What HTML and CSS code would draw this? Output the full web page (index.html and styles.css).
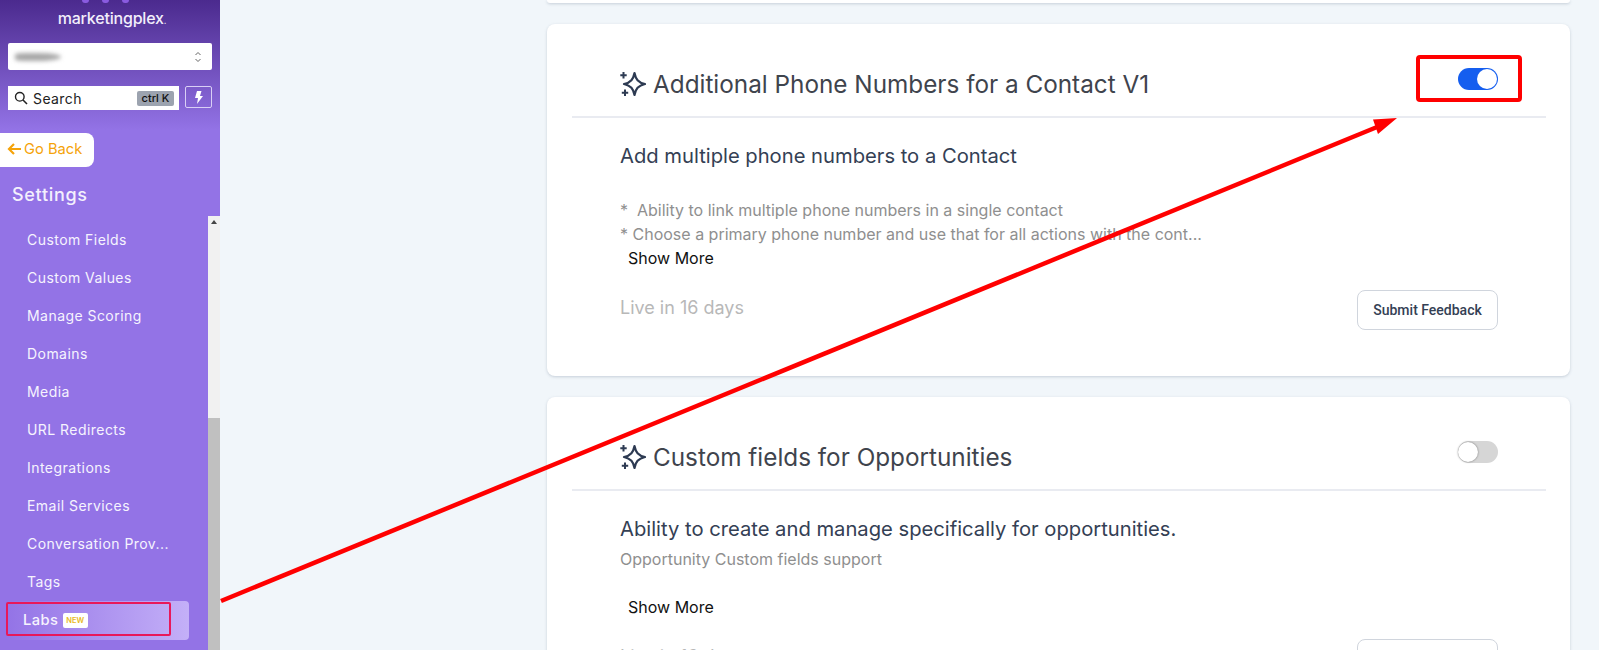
FILE: index.html
```html
<!DOCTYPE html>
<html lang="en">
<head>
    <meta charset="UTF-8">
    <meta name="viewport" content="width=device-width, initial-scale=1.0">
    <title>Labs</title>
    <link rel="stylesheet" href="styles.css">
</head>
<body>
    <aside class="sidebar">
        <div class="logo-dots"><span></span><span></span><span></span></div>
        <div class="logo-name">marketingplex<small>.</small></div>
        <div class="account-select">
            <span class="blurred-name"></span>
            <svg class="chevrons" width="8" height="14" viewBox="0 0 8 14"><path d="M1.500 5L4 2.500 6.500 5M1.500 9L4 11.500 6.500 9" fill="none" stroke="#666" stroke-width="1"/></svg>
        </div>
        <div class="search-row">
            <div class="search-box">
                <svg width="14" height="14" viewBox="0 0 14 14"><circle cx="5.800" cy="5.800" r="4.300" fill="none" stroke="#222" stroke-width="1.400"/><path d="M9 9l4 4" stroke="#222" stroke-width="1.600"/></svg>
                <span class="search-label">Search</span>
                <kbd class="shortcut">ctrl K</kbd>
            </div>
            <button class="bolt-btn">
                <svg width="9" height="13" viewBox="0 0 9 13"><path d="M3 0h4.500L6 5h3L3 13l1-6H1z" fill="#fff"/></svg>
            </button>
        </div>
        <a class="go-back">
            <svg width="14" height="14" viewBox="0 0 14 14"><path d="M7 2L2 7l5 5M2 7h12" fill="none" stroke="#f5a30a" stroke-width="2.200"/></svg>
            Go Back
        </a>
        <div class="settings-title">Settings</div>
        <div class="nav-wrap">
            <nav class="nav-list">
                <a>Custom Fields</a>
                <a>Custom Values</a>
                <a>Manage Scoring</a>
                <a>Domains</a>
                <a>Media</a>
                <a>URL Redirects</a>
                <a>Integrations</a>
                <a>Email Services</a>
                <a>Conversation Prov...</a>
                <a>Tags</a>
                <a class="active">Labs <span class="new-badge">NEW</span></a>
            </nav>
            <div class="scrollbar">
                <span class="scroll-up"></span>
                <span class="scroll-thumb"></span>
            </div>
        </div>
    </aside>

    <main class="content">
        <div class="card card-stub"></div>

        <section class="card">
            <header class="card-head">
                <h2>
                    <svg class="sparkle" viewBox="0 0 26 26"><path d="M14.500 2c1.200 6 3.500 9.400 10.500 11-7 1.600-9.300 5-10.500 11-1.200-6-3.500-9.400-10.500-11 7-1.600 9.300-5 10.500-11z" fill="none" stroke="#2d3a52" stroke-width="2.200" stroke-linejoin="round"/><path d="M3.500 1v6.500M.3 4.200h6.400M5 18.500V25M1.800 21.700h6.400" stroke="#2d3a52" stroke-width="2"/></svg>
                    Additional Phone Numbers for a Contact V1
                </h2>
                <span class="toggle on"></span>
            </header>
            <div class="card-body">
                <h3>Add multiple phone numbers to a Contact</h3>
                <p class="desc desc-list">*&nbsp; Ability to link multiple phone numbers in a single contact<br>* Choose a primary phone number and use that for all actions with the cont...</p>
                <a class="show-more">Show More</a>
                <div class="card-foot">
                    <span class="live">Live in 16 days</span>
                    <button class="feedback">Submit Feedback</button>
                </div>
            </div>
        </section>

        <section class="card">
            <header class="card-head">
                <h2>
                    <svg class="sparkle" viewBox="0 0 26 26"><path d="M14.500 2c1.200 6 3.500 9.400 10.500 11-7 1.600-9.300 5-10.500 11-1.200-6-3.500-9.400-10.500-11 7-1.600 9.300-5 10.500-11z" fill="none" stroke="#2d3a52" stroke-width="2.200" stroke-linejoin="round"/><path d="M3.500 1v6.500M.3 4.200h6.400M5 18.500V25M1.800 21.700h6.400" stroke="#2d3a52" stroke-width="2"/></svg>
                    Custom fields for Opportunities
                </h2>
                <span class="toggle"></span>
            </header>
            <div class="card-body">
                <h3>Ability to create and manage specifically for opportunities.</h3>
                <p class="desc">Opportunity Custom fields support</p>
                <a class="show-more show-more-gap">Show More</a>
                <div class="card-foot">
                    <span class="live">Live in 16 days</span>
                    <button class="feedback">Submit Feedback</button>
                </div>
            </div>
        </section>
    </main>

    <!-- screenshot annotations -->
    <div class="mark mark-toggle"></div>
    <div class="mark mark-labs"></div>
    <svg class="arrow" width="1599" height="650" viewBox="0 0 1599 650">
        <path d="M221 601L1382 125" stroke="#f00" stroke-width="4.500" fill="none"/>
        <path d="M1397 118L1373 119.500 1378 134z" fill="#f00"/>
    </svg>
</body>
</html>
```

FILE: styles.css
```css
* {
    box-sizing: border-box;
}
html, body {
    height: 650px;
}
body {
    margin: 0;
    overflow: hidden;
    display: flex;
    background: #f1f6fa;
    font-family: Inter, "Liberation Sans", sans-serif;
}
.sidebar {
    width: 220px;
    height: 650px;
    flex-shrink: 0;
    display: flex;
    flex-direction: column;
    background: linear-gradient(to bottom, #4b2a8e 0, #9373e6 130px, #9373e6 100%);
    font-family: Inter, "Liberation Sans", sans-serif;
    color: #fff;
}
.logo-dots {
    height: 3px;
    display: flex;
    justify-content: center;
    gap: 13px;
    padding-right: 10px;
}
.logo-dots span {
    width: 7px;
    height: 3px;
    border-radius: 0 0 4px 4px;
    background: #8a5be0;
}
.logo-name {
    margin-top: 5px;
    padding-left: 4px;
    height: 20px;
    text-align: center;
    font-size: 16px;
    font-weight: 500;
    line-height: 20px;
    letter-spacing: -0.2px;
    color: #f2eefb;
}
.logo-name small {
    font-size: 9px;
}
.account-select {
    margin: 15px 8px 0;
    height: 27px;
    width: 204px;
    background: #fff;
    border-radius: 2px;
    display: flex;
    align-items: center;
    justify-content: space-between;
    padding: 0 10px 0 7px;
}
.blurred-name {
    width: 46px;
    height: 8px;
    background: #a8a8a8;
    border-radius: 40% 100% 100% 40%;
    filter: blur(2px);
}
.search-row {
    margin: 16px 8px 0;
    display: flex;
    gap: 6px;
}
.search-box {
    width: 171px;
    height: 24px;
    background: #fff;
    display: flex;
    align-items: center;
    padding: 0 5px 0 6px;
    color: #222;
}
.search-label {
    margin-left: 5px;
    flex: 1;
    font-size: 14px;
    letter-spacing: 0.4px;
}
.shortcut {
    width: 37px;
    height: 15px;
    background: #9ca3af;
    border-radius: 2px;
    font-family: Inter, sans-serif;
    font-size: 11px;
    font-weight: 500;
    line-height: 15px;
    text-align: center;
    color: #111;
}
.bolt-btn {
    width: 27px;
    height: 22px;
    padding: 0;
    border: 1px solid #d9cff5;
    border-radius: 2px;
    background: transparent;
    display: flex;
    align-items: center;
    justify-content: center;
}
.go-back {
    margin-top: 23px;
    width: 94px;
    height: 34px;
    background: #fff;
    border-radius: 0 8px 8px 0;
    display: flex;
    align-items: center;
    gap: 3px;
    padding: 0 0 2px 7px;
    color: #f5a30a;
    font-size: 14.700px;
}
.settings-title {
    margin: 16px 0 0 12px;
    height: 24px;
    font-size: 18px;
    font-weight: 500;
    line-height: 24px;
    letter-spacing: 0.7px;
    color: #f4f0fd;
}
.nav-wrap {
    margin-top: 9px;
    flex: 1;
    display: flex;
    min-height: 0;
}
.nav-list {
    width: 208px;
    padding-top: 5px;
    display: flex;
    flex-direction: column;
}
.nav-list a {
    height: 38px;
    line-height: 38px;
    padding-left: 27px;
    font-size: 14px;
    letter-spacing: 0.45px;
    white-space: nowrap;
    color: #f6f3fe;
}
.nav-list a.active {
    margin-left: 6px;
    width: 183px;
    height: 39px;
    padding-left: 17px;
    border-radius: 4px;
    font-size: 14.700px;
    font-weight: 500;
    background: linear-gradient(to right, #9373e6, #c4b0f8);
}
.new-badge {
    display: inline-block;
    width: 25px;
    height: 15px;
    line-height: 15px;
    vertical-align: 2px;
    background: #fff;
    border-radius: 2px;
    text-align: center;
    font-size: 7.500px;
    font-weight: 600;
    color: #e8b923;
    letter-spacing: 0;
}
.scrollbar {
    width: 12px;
    background: #f1f1f1;
    display: flex;
    flex-direction: column;
    justify-content: space-between;
    align-items: center;
}
.scroll-up {
    margin-top: 4px;
    border: 3px solid transparent;
    border-top: 0;
    border-bottom: 4px solid #444;
}
.scroll-thumb {
    width: 100%;
    height: 232px;
    background: #c0c0c0;
}
.content {
    flex: 1;
    min-width: 0;
    padding-left: 327px;
    padding-right: 29px;
}
.card {
    background: #fff;
    border-radius: 8px;
    box-shadow: 0 1px 3px rgba(100, 116, 139, 0.3);
    margin-bottom: 21px;
    height: 352px;
}
.card-stub {
    height: 3px;
    border-radius: 0 0 8px 8px;
}
.card-head {
    margin: 0 24px 0 25px;
    height: 94px;
    padding: 30px 48px 0 48px;
    border-bottom: 2px solid #e9ebf1;
    display: flex;
    justify-content: space-between;
    align-items: flex-start;
}
.card-head h2 {
    margin: 15px 0 0;
    display: flex;
    align-items: center;
    gap: 7px;
    font-size: 24.300px;
    line-height: 30px;
    font-weight: 400;
    color: #3f444d;
}
.sparkle {
    width: 26px;
    height: 26px;
}
.toggle {
    margin-top: 14px;
    width: 40px;
    height: 22px;
    border-radius: 11px;
    background: #d6d6d6;
    position: relative;
}
.toggle::after {
    content: "";
    position: absolute;
    left: 0;
    top: 1px;
    width: 20px;
    height: 20px;
    border-radius: 50%;
    background: #fff;
    box-shadow: 0 0 2px rgba(0, 0, 0, 0.5);
}
.toggle.on {
    background: #155eef;
}
.toggle.on::after {
    left: 19px;
    box-shadow: none;
}
.card-body {
    padding: 24px 72px 0 73px;
}
.card-body h3 {
    margin: 0;
    height: 28px;
    font-size: 20.200px;
    line-height: 28px;
    font-weight: 400;
    color: #344054;
}
.desc {
    margin: 4px 0 0;
    font-size: 16px;
    line-height: 24px;
    color: #8f8f8f;
}
.desc-list {
    margin-top: 28px;
}
.show-more {
    display: block;
    padding-left: 8px;
    font-size: 16px;
    line-height: 24px;
    color: #111;
}
.show-more-gap {
    margin-top: 24px;
}
.card-foot {
    margin-top: 20px;
    display: flex;
    justify-content: space-between;
    align-items: flex-start;
}
.live {
    margin-top: 6px;
    font-size: 18px;
    line-height: 24px;
    color: #b8b8b8;
}
.feedback {
    width: 141px;
    height: 40px;
    background: #fff;
    border: 1px solid #d0d5dd;
    border-radius: 8px;
    font-family: Roboto, sans-serif;
    font-size: 14px;
    font-weight: 500;
    color: #344054;
}
.mark {
    position: absolute;
    border-style: solid;
}
.mark-toggle {
    left: 1416px;
    top: 55px;
    width: 106px;
    height: 47px;
    border-width: 4px;
    border-color: #f00;
    border-radius: 4px;
}
.mark-labs {
    left: 6px;
    top: 602px;
    width: 165px;
    height: 34px;
    border-width: 2px;
    border-color: #e8185a;
    border-radius: 2px;
}
.arrow {
    position: absolute;
    left: 0;
    top: 0;
    pointer-events: none;
}
```
